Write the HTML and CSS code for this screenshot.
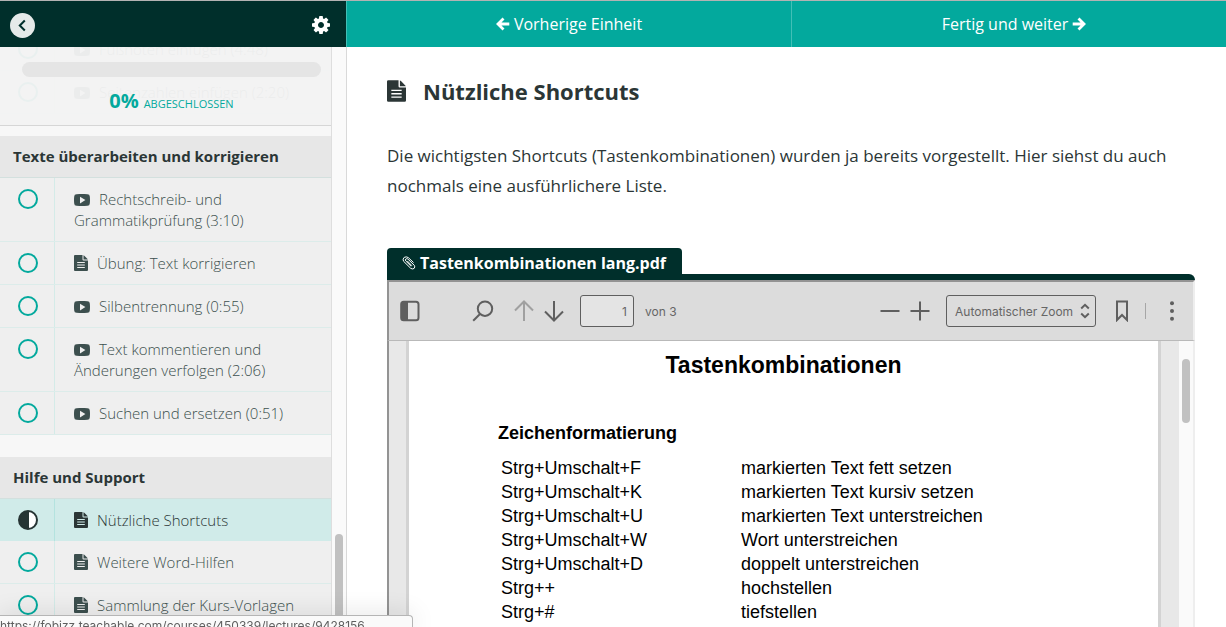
FILE: index.html
```html
<!DOCTYPE html>
<html lang="de">
<head>
<meta charset="utf-8">
<meta name="viewport" content="width=device-width, initial-scale=1">
<title>Nützliche Shortcuts</title>
<link rel="stylesheet" href="styles.css">
</head>
<body>
<svg class="symbols" aria-hidden="true">
  <symbol id="video" viewBox="0 0 16 12"><path fill-rule="evenodd" d="M2.500 .2Q8-.3 13.500 .2Q15.700 .3 15.800 2.500Q16.200 6 15.800 9.500Q15.700 11.700 13.500 11.800Q8 12.300 2.500 11.800Q.3 11.700 .2 9.500Q-.2 6 .2 2.500Q.3 .3 2.500 .2ZM6 2.800V9.400L11.400 6Z"/></symbol>
  <symbol id="file" viewBox="0 0 14 16"><path fill-rule="evenodd" d="M1 0H8.500V4.500Q8.500 5.500 9.500 5.500H14V15Q14 16 13 16H1Q0 16 0 15V1Q0 0 1 0ZM3.200 7V8H10.800V7ZM3.200 9.500V10.500H10.800V9.500ZM3.200 12V13H10.800V12ZM9.500 .2Q10 .4 10.300 .7L13.300 3.700Q13.700 4.100 13.800 4.500H9.500Z"/></symbol>
  <symbol id="arrow" viewBox="0 0 14 14"><path d="M7.500 1.500L2 7L7.500 12.500M2.500 7H13.300" fill="none" stroke="currentColor" stroke-width="2.800"/></symbol>
</svg>

<header class="topbar">
  <div class="topbar-side">
    <button class="back" type="button" aria-label="Zurück"><svg width="25" height="25" viewBox="0 0 25 25"><path d="M14.800 7.500L9.800 12.500L14.800 17.500"/></svg></button>
    <button class="settings" type="button" aria-label="Einstellungen"><svg width="18" height="18" viewBox="128 128 1536 1536"><path d="M1152 896q0-106-75-181t-181-75-181 75-75 181 75 181 181 75 181-75 75-181zm512-109v222q0 12-8 23t-20 13l-185 28q-19 54-39 91 35 50 107 138 10 12 10 25t-9 23q-27 37-99 108t-94 71q-12 0-26-9l-138-108q-44 23-91 38-16 136-29 186-7 28-36 28h-222q-14 0-24.500-8.500t-11.500-21.500l-28-184q-49-16-90-37l-141 107q-10 9-25 9-14 0-25-11-126-114-165-168-7-10-7-23 0-12 8-23 15-21 51-66.500t54-70.500q-27-50-41-99l-183-27q-13-2-21-12.500t-8-23.500v-222q0-12 8-23t19-13l186-28q14-46 39-92-40-57-107-138-10-12-10-24 0-10 9-23 26-36 98.500-107.500t94.500-71.500q13 0 26 10l138 107q44-23 91-38 16-136 29-186 7-28 36-28h222q14 0 24.500 8.500t11.500 21.500l28 184q49 16 90 37l142-107q9-9 24-9 13 0 25 10 129 119 165 170 7 8 7 22 0 12-8 23-15 21-51 66.500t-54 70.500q26 50 41 98l183 28q13 2 21 12.500t8 23.500z"/></svg></button>
  </div>
  <nav class="units">
    <a href="#prev"><svg class="arrow"><use href="#arrow"/></svg>Vorherige Einheit</a>
    <a href="#next">Fertig und weiter<svg class="arrow flip"><use href="#arrow"/></svg></a>
  </nav>
</header>

<div class="layout">
  <aside class="sidebar">
    <div class="progress">
      <div class="progress-track"></div>
      <p class="progress-label"><strong>0%</strong> <span>ABGESCHLOSSEN</span></p>
    </div>
    <div class="course">
      <section>
        <ul class="lectures">
          <li><span class="status"><i class="ring"></i></span><a href="#l1"><svg class="ico-video"><use href="#video"/></svg>Fußnoten einfügen (4:48)</a></li>
          <li><span class="status"><i class="ring"></i></span><a href="#l2"><svg class="ico-video"><use href="#video"/></svg>Seitenzahlen einfügen (2:20)</a></li>
        </ul>
      </section>
      <section>
        <h2>Texte überarbeiten und korrigieren</h2>
        <ul class="lectures">
          <li><span class="status"><i class="ring"></i></span><a href="#l3"><svg class="ico-video"><use href="#video"/></svg>Rechtschreib- und Grammatikprüfung (3:10)</a></li>
          <li><span class="status"><i class="ring"></i></span><a href="#l4"><svg class="ico-file"><use href="#file"/></svg>Übung: Text korrigieren</a></li>
          <li><span class="status"><i class="ring"></i></span><a href="#l5"><svg class="ico-video"><use href="#video"/></svg>Silbentrennung (0:55)</a></li>
          <li><span class="status"><i class="ring"></i></span><a href="#l6"><svg class="ico-video"><use href="#video"/></svg>Text kommentieren und Änderungen verfolgen (2:06)</a></li>
          <li><span class="status"><i class="ring"></i></span><a href="#l7"><svg class="ico-video"><use href="#video"/></svg>Suchen und ersetzen (0:51)</a></li>
        </ul>
      </section>
      <section>
        <h2>Hilfe und Support</h2>
        <ul class="lectures">
          <li class="active"><span class="status"><i class="ring half"></i></span><a href="#l8"><svg class="ico-file"><use href="#file"/></svg>Nützliche Shortcuts</a></li>
          <li><span class="status"><i class="ring"></i></span><a href="#l9"><svg class="ico-file"><use href="#file"/></svg>Weitere Word-Hilfen</a></li>
          <li><span class="status"><i class="ring"></i></span><a href="#l10"><svg class="ico-file"><use href="#file"/></svg>Sammlung der Kurs-Vorlagen</a></li>
        </ul>
      </section>
    </div>
    <div class="scroll side-scroll"><span></span></div>
  </aside>

  <main class="content">
    <h1><svg class="title-icon"><use href="#file"/></svg>Nützliche Shortcuts</h1>
    <p class="intro">Die wichtigsten Shortcuts (Tastenkombinationen) wurden ja bereits vorgestellt. Hier siehst du auch nochmals eine ausführlichere Liste.</p>

    <div class="attachment">
      <div class="tab"><svg width="14" height="14" viewBox="0 0 14 14"><path d="M11.500 6.500L6.300 1.600Q4.500 .3 2.300 1.300Q.2 3 1.500 5.200L8.700 12.300Q10.300 13.500 12 12.500Q13.500 11 12.300 9.300L5.800 3Q4.800 2.200 3.800 3Q3 4 3.800 5L9.200 10.300M10 9.800L5.300 5"/></svg>Tastenkombinationen lang.pdf</div>
      <div class="viewer">
        <div class="toolbar">
          <button class="tool tool-panel" type="button" aria-label="Sidebar"><svg width="20" height="22" viewBox="0 0 20 22"><rect x="1.200" y="1.700" width="17.300" height="18.600" rx="2.500"/><path class="solid" d="M1 2H8V20H1Z"/></svg></button>
          <button class="tool tool-find" type="button" aria-label="Suchen"><svg width="22" height="22" viewBox="0 0 22 22"><circle cx="13" cy="8.700" r="7.200"/><path d="M8 14L1.200 20.800"/></svg></button>
          <button class="tool dim" type="button" aria-label="Vorherige Seite"><svg width="20" height="22" viewBox="0 0 20 22"><path d="M10 21V1.500M1 10.500L10 1.500L19 10.500"/></svg></button>
          <button class="tool" type="button" aria-label="Nächste Seite"><svg width="20" height="22" viewBox="0 0 20 22"><path d="M10 1V20.500M1 11.500L10 20.500L19 11.500"/></svg></button>
          <input class="page-no" id="page" type="text" value="1">
          <label class="page-count" for="page">von 3</label>
          <button class="tool" type="button" aria-label="Verkleinern"><svg width="20" height="20" viewBox="0 0 20 20"><path d="M.5 10H19.500"/></svg></button>
          <button class="tool" type="button" aria-label="Vergrößern"><svg width="20" height="20" viewBox="0 0 20 20"><path d="M.5 10H19.500M10 .5V19.500"/></svg></button>
          <div class="zoom">
            <select aria-label="Zoom"><option>Automatischer Zoom</option></select>
            <svg width="10" height="16" viewBox="0 0 10 16"><path d="M1.200 5.500L5 1.800L8.800 5.500M1.200 10.500L5 14.200L8.800 10.500"/></svg>
          </div>
          <button class="tool" type="button" aria-label="Lesezeichen"><svg width="14" height="22" viewBox="0 0 14 22"><path d="M2 1.500H12V20L7 15L2 20Z"/></svg></button>
          <span class="sep"></span>
          <button class="tool" type="button" aria-label="Mehr"><svg width="6" height="20" viewBox="0 0 6 20"><circle class="dot" cx="3" cy="2.200" r="2"/><circle class="dot" cx="3" cy="10" r="2"/><circle class="dot" cx="3" cy="17.800" r="2"/></svg></button>
        </div>
        <div class="stage">
          <article class="sheet">
            <h2>Tastenkombinationen</h2>
            <h3>Zeichenformatierung</h3>
            <table>
              <tr><td>Strg+Umschalt+F</td><td>markierten Text fett setzen</td></tr>
              <tr><td>Strg+Umschalt+K</td><td>markierten Text kursiv setzen</td></tr>
              <tr><td>Strg+Umschalt+U</td><td>markierten Text unterstreichen</td></tr>
              <tr><td>Strg+Umschalt+W</td><td>Wort unterstreichen</td></tr>
              <tr><td>Strg+Umschalt+D</td><td>doppelt unterstreichen</td></tr>
              <tr><td>Strg++</td><td>hochstellen</td></tr>
              <tr><td>Strg+#</td><td>tiefstellen</td></tr>
            </table>
          </article>
          <div class="scroll stage-scroll"><span></span></div>
        </div>
      </div>
    </div>
  </main>
</div>
<div class="link-status">https://fobizz.teachable.com/courses/450339/lectures/9428156</div>
</body>
</html>
```

FILE: styles.css
```css
* { box-sizing: border-box; }
html, body { height: 100%; }
body {
  margin: 0;
  display: flex;
  flex-direction: column;
  overflow: hidden;
  border-top: 1px solid #b3b3b3;
  background: #fff;
  color: #2b3636;
  font-family: "Open Sans", "Noto Sans", sans-serif;
}
h1, h2, h3, p, ul { margin: 0; padding: 0; }
button { border: 0; padding: 0; background: none; font: inherit; color: inherit; }
a { color: inherit; text-decoration: none; }
svg { flex: none; }
.symbols { position: absolute; width: 0; height: 0; }

/* top bar */
.topbar { display: flex; flex: none; height: 46px; }
.topbar-side {
  display: flex;
  align-items: center;
  justify-content: space-between;
  width: 346px;
  padding: 2px 16px 0 10px;
  background: #002f2b;
  flex: none;
}
.back { width: 25px; height: 25px; border-radius: 50%; background: #e5eae9; }
.back svg { display: block; fill: none; stroke: #002f2b; stroke-width: 2; }
.settings svg { display: block; fill: #fff; }
.units { display: flex; flex: 1; margin-right: -10px; background: #03a99d; }
.units a {
  display: flex;
  flex: 1;
  align-items: center;
  justify-content: center;
  gap: 4px;
  border-left: 1px solid #42bfb6;
  color: #fff;
  font-size: 16px;
}
.arrow { width: 14px; height: 14px; }
.flip { transform: scaleX(-1); }

.layout { display: flex; flex: 1; min-height: 0; }

/* sidebar */
.sidebar {
  position: relative;
  display: flex;
  flex: none;
  width: 347px;
  overflow: hidden;
  border-right: 1px solid #d9d9d9;
  background: #f7f7f7;
}
.progress {
  position: absolute;
  top: 0;
  left: 0;
  width: 331px;
  height: 79px;
  padding: 15px 10px 0 22px;
  border-bottom: 1px solid #d6d6d6;
  background: rgba(242, 242, 242, .96);
}
.progress-track { height: 15px; border-radius: 8px; background: #e5e5e5; }
.progress-label { margin-top: 10px; text-align: center; color: #03a99d; font-size: 11px; line-height: 28px; }
.progress-label strong { margin-right: 2px; font-size: 20px; }
.course { flex: 1; margin-top: -19px; border-right: 1px solid #dedede; }
.course section { margin-bottom: 22px; }
.course h2 {
  height: 42px;
  padding: 0 13px;
  border-bottom: 1px solid #d3e0de;
  background: #e7e7e7;
  font-size: 15px;
  line-height: 41px;
}
.lectures { list-style: none; }
.lectures li { display: flex; border-bottom: 1px solid #dcecea; background: #efefef; color: #3c4f4e; }
.lectures li.active { border-bottom: 0; background: #d0ebe9; color: #2b3636; }
.status { flex: none; width: 55px; padding: 11px 0 0 18px; border-right: 1px solid #d4ebe8; }
.active .status { border-color: #b4e3df; }
.ring { display: block; width: 20px; height: 20px; border: 2px solid #03a99d; border-radius: 50%; }
.half { border-color: #263434; background: linear-gradient(90deg, #263434 55%, #fff 55%); }
.lectures a { flex: 1; padding: 11px 50px 10px 19px; font-size: 15px; font-weight: 300; line-height: 21px; }
.lectures li:last-child a { padding-right: 20px; }
.ico-video { width: 16px; height: 12px; margin-right: 9px; vertical-align: -1px; fill: currentColor; }
.ico-file { width: 14px; height: 16px; margin-right: 9px; vertical-align: -2px; fill: currentColor; }

.scroll { flex: none; width: 14px; padding: 0 3px; background: #fafafa; }
.scroll span { display: block; width: 8px; border-radius: 4px; background: #c1c1c1; }
.side-scroll span { height: 110px; margin-top: 487px; }

/* lesson */
.content { display: flex; flex: 1; flex-direction: column; min-width: 0; padding: 28px 31px 0 40px; }
h1 { display: flex; align-items: center; gap: 17px; font-size: 22px; line-height: 32px; }
.title-icon { width: 19px; height: 22px; fill: currentColor; }
.intro { margin-top: 34px; font-size: 17px; line-height: 30px; }
.attachment { display: flex; flex: 1; flex-direction: column; min-height: 0; margin-top: 47px; }
.tab {
  display: flex;
  align-items: center;
  align-self: flex-start;
  gap: 4px;
  height: 26px;
  padding: 4px 16px 0 15px;
  border-radius: 4px 4px 0 0;
  background: #002f2b;
  color: #fff;
  font-size: 16px;
  font-weight: 700;
}
.tab svg { fill: none; stroke: #fff; stroke-width: 1; }

/* document viewer */
.viewer {
  display: flex;
  flex: 1;
  flex-direction: column;
  min-height: 0;
  border-top: 6px solid #002f2b;
  border-radius: 0 6px 0 0;
  overflow: hidden;
}
.toolbar {
  display: flex;
  flex: none;
  align-items: center;
  height: 61px;
  padding: 0 6px;
  border: 2px solid #939393;
  border-right-color: #eee;
  border-bottom: 1px solid #b9b9b9;
  background: #dcdcdc;
  color: #666;
  font: 12px Inter, "Liberation Sans", sans-serif;
}
.tool { display: flex; flex: none; align-items: center; justify-content: center; width: 30px; height: 30px; }
.tool svg, .zoom svg { fill: none; stroke: #5f5f5f; stroke-width: 2; }
.tool .solid, .tool .dot { fill: #5f5f5f; stroke: none; }
.tool-panel { margin-right: 43px; }
.tool-find { margin-right: 11px; }
.dim svg { stroke: #a0a0a0; }
.page-no {
  width: 54px;
  height: 32px;
  margin: 0 11px;
  padding: 0 6px;
  border: 1px solid #5f5f5f;
  border-radius: 3px;
  background: #e4e4e4;
  color: #666;
  font: inherit;
  text-align: right;
}
.page-count { margin-right: auto; }
.zoom { position: relative; margin: 0 11px; }
.zoom select {
  display: block;
  width: 150px;
  height: 32px;
  padding: 0 8px;
  appearance: none;
  border: 1px solid #5f5f5f;
  border-radius: 3px;
  background: #dcdcdc;
  color: #666;
  font: inherit;
}
.zoom svg { position: absolute; top: 8px; right: 6px; pointer-events: none; }
.sep { width: 1px; height: 16px; margin: 0 11px 0 8px; background: #a6a6a6; }
.stage {
  display: flex;
  flex: 1;
  min-height: 0;
  padding-left: 17px;
  border: solid #939393;
  border-width: 0 2px;
  border-right-color: #eee;
  background: #e8e8e8;
}
.sheet {
  flex: 1;
  margin-right: 18px;
  padding: 10px 89px 0;
  border: solid #d3d3d3;
  border-width: 0 3px;
  background: #fff;
  color: #000;
  font-family: "Liberation Sans", Arial, sans-serif;
}
.sheet h2 { margin: 0 -89px; font-size: 23px; line-height: 28px; text-align: center; }
.sheet h3 { margin-top: 42px; font-size: 18px; line-height: 24px; }
.sheet table { margin: 11px 0 0 3px; border-spacing: 0; font-size: 18px; line-height: 24px; }
.sheet td { padding: 0; white-space: nowrap; }
.sheet td:first-child { width: 240px; }
.stage-scroll { padding-top: 18px; }
.stage-scroll span { height: 64px; }

/* link preview in the window corner */
.link-status {
  position: fixed;
  left: 0;
  bottom: 0;
  width: 413px;
  height: 12px;
  overflow: hidden;
  border: solid #b5b5b5;
  border-width: 1px 1px 0 0;
  border-radius: 0 4px 0 0;
  background: #fafafa;
  box-shadow: 0 0 24px rgba(0, 0, 0, .15);
  color: #5f5f5f;
  font: 12px/19px Inter, "Liberation Sans", sans-serif;
  white-space: nowrap;
}
```
